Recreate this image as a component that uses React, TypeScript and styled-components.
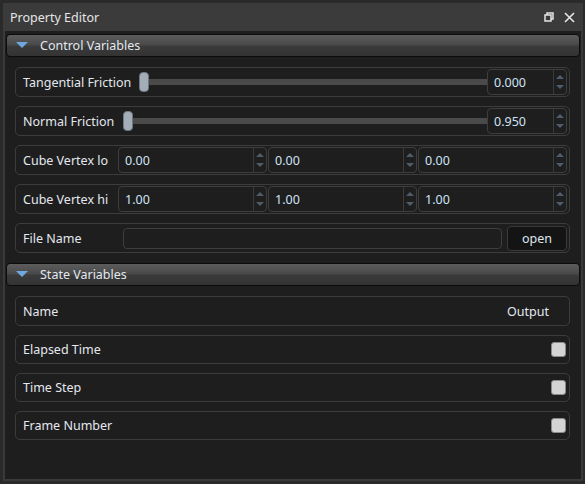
import React from "react";
import styled, { createGlobalStyle } from "styled-components";

const Global = createGlobalStyle`
  html, body { margin: 0; padding: 0; background: #2b2b2b; }
  body { font-family: "Noto Sans", "Open Sans", sans-serif; }
  * { box-sizing: border-box; }
`;

const Window = styled.div`
  width: 585px;
  height: 484px;
  background: #2a2a2a;
  padding: 3px 2px 3px 3px;
  display: flex;
  flex-direction: column;
`;

const TitleBar = styled.div`
  height: 28px;
  background: #3b3b3b;
  display: flex;
  align-items: center;
  padding: 0 8px 0 7px;
  color: #e6e6e6;
  font-size: 12.5px;
`;

const Title = styled.div`
  flex: 1;
`;

const TitleIcons = styled.div`
  display: flex;
  align-items: center;
  gap: 10px;
`;

const Body = styled.div`
  flex: 1;
  background: #1e1e1e;
  border-left: 2px solid #3a3a3a;
  border-right: 2px solid #3a3a3a;
  border-bottom: 2px solid #3a3a3a;
  padding: 3px 1px 0 1px;
  display: flex;
  flex-direction: column;
`;

const SectionHeader = styled.div`
  height: 23px;
  border: 1px solid #0c0c0c;
  border-radius: 4px;
  background: linear-gradient(#5c5c5c 0%, #4a4a4a 45%, #3a3a3a 55%, #333333 100%);
  display: flex;
  align-items: center;
  padding-left: 9px;
  color: #e2e8ef;
  font-size: 12.5px;
  gap: 12px;
`;

const Rows = styled.div`
  display: flex;
  flex-direction: column;
  gap: 9px;
  padding: 10px 10px 10px 9px;
`;

const Row = styled.div<{ $h?: number }>`
  height: ${(p) => p.$h ?? 30}px;
  border: 1px solid #3c3c3c;
  border-radius: 5px;
  display: flex;
  align-items: center;
  padding: 0 2px 0 7px;
  color: #e4e8ee;
  font-size: 12.5px;
`;

const Label = styled.div<{ $w?: number }>`
  width: ${(p) => (p.$w ? `${p.$w}px` : "auto")};
  flex: ${(p) => (p.$w ? "none" : "1")};
  white-space: nowrap;
`;

const SliderWrap = styled.div`
  flex: 1;
  height: 20px;
  position: relative;
  display: flex;
  align-items: center;
`;

const Track = styled.div`
  height: 6px;
  width: 100%;
  background: #4a4a4a;
`;

const Handle = styled.div`
  position: absolute;
  left: 0;
  top: 0;
  width: 10px;
  height: 20px;
  border-radius: 4px;
  background: #a3adb8;
  border: 1px solid #6e7681;
`;

const Spin = styled.div<{ $w?: number }>`
  width: ${(p) => (p.$w ? `${p.$w}px` : "auto")};
  flex: ${(p) => (p.$w ? "none" : "1")};
  height: 26px;
  border: 1px solid #3e3e3e;
  border-radius: 4px;
  display: flex;
  align-items: stretch;
  color: #cfe3f6;
  font-size: 12.5px;
`;

const SpinValue = styled.div`
  flex: 1;
  display: flex;
  align-items: center;
  padding-left: 6px;
`;

const SpinArrows = styled.div`
  width: 13px;
  border-left: 1px solid #3a3a3a;
  display: flex;
  flex-direction: column;
  align-items: center;
  justify-content: space-between;
  padding: 5px 0 5px;
`;

const Arrow = styled.div<{ $up?: boolean }>`
  width: 0;
  height: 0;
  border-left: 4px solid transparent;
  border-right: 4px solid transparent;
  ${(p) =>
    p.$up ? "border-bottom: 4px solid #4f5d6b;" : "border-top: 4px solid #4f5d6b;"}
`;

const SpinGroup = styled.div`
  flex: 1;
  display: flex;
  gap: 1px;
`;

const TextInput = styled.div`
  flex: 1;
  height: 21px;
  border: 1px solid #3e3e3e;
  border-radius: 4px;
  margin: 0 5px 0 0;
`;

const Button = styled.div`
  width: 60px;
  height: 25px;
  background: #141414;
  border: 1px solid #3a3a3a;
  border-radius: 4px;
  display: flex;
  align-items: center;
  justify-content: center;
  color: #dfe6ee;
  font-size: 12.5px;
`;

const Output = styled.div`
  padding-right: 18px;
`;

const Check = styled.div`
  width: 15px;
  height: 15px;
  border-radius: 3px;
  background: #d4d4d4;
  border: 1px solid #8a8a8a;
  margin-right: 1px;
`;

const Tri = () => (
  <svg width="12" height="7" viewBox="0 0 12 7">
    <polygon points="0,0 12,0 6,6" fill="#6fa7df" />
  </svg>
);

const SpinBox = ({ v, w }: { v: string; w?: number }) => (
  <Spin $w={w}>
    <SpinValue>{v}</SpinValue>
    <SpinArrows>
      <Arrow $up />
      <Arrow />
    </SpinArrows>
  </Spin>
);

const SliderRow = ({ label, lw, v }: { label: string; lw: number; v: string }) => (
  <Row>
    <Label $w={lw}>{label}</Label>
    <SliderWrap>
      <Track />
      <Handle />
    </SliderWrap>
    <SpinBox v={v} w={80} />
  </Row>
);

const VecRow = ({ label, v }: { label: string; v: string }) => (
  <Row>
    <Label $w={95}>{label}</Label>
    <SpinGroup>
      <SpinBox v={v} />
      <SpinBox v={v} />
      <SpinBox v={v} />
    </SpinGroup>
  </Row>
);

const CheckRow = ({ label }: { label: string }) => (
  <Row $h={29}>
    <Label>{label}</Label>
    <Check />
  </Row>
);

export default function App() {
  return (
    <>
      <Global />
      <Window>
        <TitleBar>
          <Title>Property Editor</Title>
          <TitleIcons>
            <svg width="10" height="10" viewBox="0 0 10 10">
              <rect x="3" y="1" width="6" height="6" fill="none" stroke="#e6e6e6" strokeWidth="1.5" />
              <rect x="1" y="3" width="6" height="6" fill="#3b3b3b" stroke="#e6e6e6" strokeWidth="1.5" />
            </svg>
            <svg width="11" height="11" viewBox="0 0 11 11">
              <path d="M1 1 L10 10 M10 1 L1 10" stroke="#e6e6e6" strokeWidth="1.6" />
            </svg>
          </TitleIcons>
        </TitleBar>
        <Body>
          <SectionHeader>
            <Tri />
            Control Variables
          </SectionHeader>
          <Rows>
            <SliderRow label="Tangential Friction" lw={116} v="0.000" />
            <SliderRow label="Normal Friction" lw={100} v="0.950" />
            <VecRow label="Cube Vertex lo" v="0.00" />
            <VecRow label="Cube Vertex hi" v="1.00" />
            <Row>
              <Label $w={100}>File Name</Label>
              <TextInput />
              <Button>open</Button>
            </Row>
          </Rows>
          <SectionHeader>
            <Tri />
            State Variables
          </SectionHeader>
          <Rows>
            <Row>
              <Label>Name</Label>
              <Output>Output</Output>
            </Row>
            <CheckRow label="Elapsed Time" />
            <CheckRow label="Time Step" />
            <CheckRow label="Frame Number" />
          </Rows>
        </Body>
      </Window>
    </>
  );
}
